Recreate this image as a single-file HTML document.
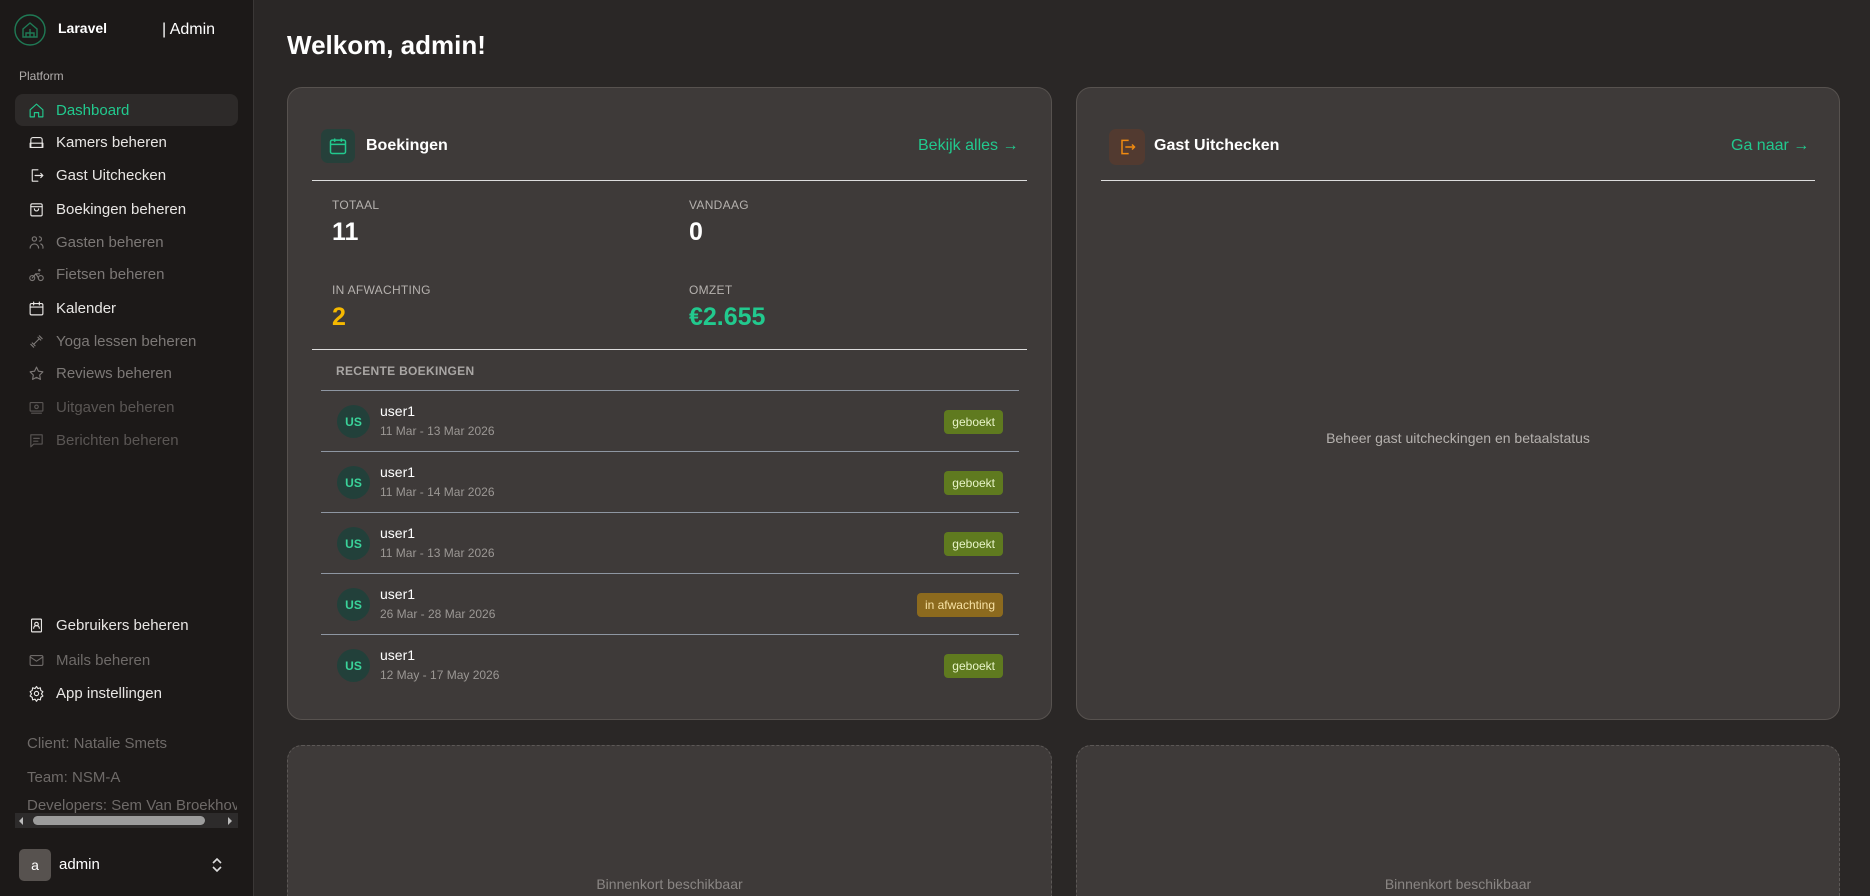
<!DOCTYPE html>
<html><head><meta charset="utf-8"><style>
*{margin:0;padding:0;box-sizing:border-box}
html{width:1870px;height:896px;overflow:hidden}
body{width:1870px;height:896px;overflow:hidden;background:#2a2726;font-family:"Liberation Sans",sans-serif;color:#fff;position:relative}
.abs{position:absolute}
.side{left:0;top:0;width:254px;height:896px;background:#1c1918;border-right:1px solid #3a3736}
.nav{position:absolute;left:15px;width:223px;height:32px;display:flex;align-items:center;font-size:15px;color:#e8e6e4}
.nav svg{position:absolute;left:13px;width:17px;height:17px;fill:none;stroke:currentColor;stroke-width:1.6;stroke-linecap:round;stroke-linejoin:round}
.nav span{position:absolute;left:41px}
.dim{color:#7c7876}
.card{position:absolute;background:#3e3a39;border:1px solid #57524f;border-radius:15px}
.lbl{position:absolute;font-size:12px;color:#b5b1ae;letter-spacing:.3px}
.val{position:absolute;font-size:25px;font-weight:bold}
.row{position:absolute;left:321px;width:698px;height:61px;border-bottom:1px solid #8e96a2}
.av{position:absolute;left:16px;top:14px;width:33px;height:33px;border-radius:50%;background:#22403a;color:#3ad39a;font-size:12px;font-weight:bold;display:flex;align-items:center;justify-content:center}
.nm{position:absolute;left:59px;top:12px;font-size:14px}
.dt{position:absolute;left:59px;top:33px;font-size:12px;color:#9b9794}
.bd{position:absolute;right:16px;top:19px;height:24px;padding:0 8px;border-radius:4px;font-size:12px;display:flex;align-items:center;background:#5f7a1f;color:#e8f4c8}
.bd.w{background:#8c6a1e;color:#f7e2a4}
</style></head><body>
<div class="abs side">
  <svg class="abs" style="left:14px;top:14px" width="32" height="32" viewBox="0 0 32 32" fill="none" stroke="#1f7a55" stroke-width="1.4"><circle cx="16" cy="16" r="15"/><path d="M9 15l7-6 7 6v8H9z M12 23v-4h8v4 M16 15v8"/></svg>
  <div class="abs" style="left:58px;top:20px;font-size:14px;font-weight:bold">Laravel</div>
  <div class="abs" style="left:162px;top:21px;font-size:16px">| Admin</div>
  <div class="abs" style="left:19px;top:69px;font-size:12px;color:#b0acaa">Platform</div>
  <div class="nav" style="top:94px;background:#2d2a29;border-radius:8px;color:#22c98e"><svg viewBox="0 0 24 24"><path d="M3 11l9-8 9 8v10h-6v-6h-6v6H3z"/></svg><span>Dashboard</span></div>
  <div class="nav" style="top:126px"><svg viewBox="0 0 24 24"><path d="M4 19V8a3 3 0 013-3h10a3 3 0 013 3v11M3 13h18v6H3z"/></svg><span>Kamers beheren</span></div>
  <div class="nav" style="top:159px"><svg viewBox="0 0 24 24"><path d="M14 4H6v16h8M10 12h11M18 9l3 3-3 3"/></svg><span>Gast Uitchecken</span></div>
  <div class="nav" style="top:193px"><svg viewBox="0 0 24 24"><rect x="4" y="4" width="16" height="17" rx="2"/><path d="M4 8h16M9 11a3 3 0 006 0"/></svg><span>Boekingen beheren</span></div>
  <div class="nav dim" style="top:226px"><svg viewBox="0 0 24 24"><circle cx="9" cy="7" r="3"/><path d="M3 20a6 6 0 0112 0M16 4a3 3 0 010 6M18 14a5 5 0 013 6"/></svg><span>Gasten beheren</span></div>
  <div class="nav dim" style="top:258px"><svg viewBox="0 0 24 24"><circle cx="6" cy="17" r="3.5"/><circle cx="18" cy="17" r="3.5"/><path d="M6 17l5-6 4 6M11 11h5M15 6a1 1 0 100-.1"/></svg><span>Fietsen beheren</span></div>
  <div class="nav" style="top:292px"><svg viewBox="0 0 24 24"><rect x="3" y="5" width="18" height="16" rx="2"/><path d="M3 10h18M8 3v4M16 3v4"/></svg><span>Kalender</span></div>
  <div class="nav dim" style="top:325px"><svg viewBox="0 0 24 24"><path d="M6 14l4 4M4 16l4 4M14 6l4 4M16 4l4 4M9 15l6-6"/></svg><span>Yoga lessen beheren</span></div>
  <div class="nav dim" style="top:357px"><svg viewBox="0 0 24 24"><path d="M12 3l2.8 5.8 6.2.9-4.5 4.4 1 6.2L12 17.4 6.5 20.3l1-6.2L3 9.7l6.2-.9z"/></svg><span>Reviews beheren</span></div>
  <div class="nav" style="top:391px;color:#5a5654"><svg viewBox="0 0 24 24"><rect x="3" y="5" width="18" height="12" rx="1"/><circle cx="12" cy="11" r="2.5"/><path d="M5 20h14"/></svg><span>Uitgaven beheren</span></div>
  <div class="nav" style="top:424px;color:#5a5654"><svg viewBox="0 0 24 24"><path d="M4 4h16v13H8l-4 4z M8 9h8M8 13h6"/></svg><span>Berichten beheren</span></div>
  <div class="nav" style="top:609px"><svg viewBox="0 0 24 24"><rect x="5" y="3" width="14" height="18" rx="1"/><circle cx="12" cy="10" r="2.5"/><path d="M8 16a4 4 0 018 0"/></svg><span>Gebruikers beheren</span></div>
  <div class="nav dim" style="top:644px;color:#6e6a68"><svg viewBox="0 0 24 24"><rect x="3" y="5" width="18" height="14" rx="2"/><path d="M3 7l9 6 9-6"/></svg><span>Mails beheren</span></div>
  <div class="nav" style="top:677px"><svg viewBox="0 0 24 24"><circle cx="12" cy="12" r="3"/><path d="M12 2l2 3 3.5-1 .5 3.5 3 2-2 3 2 3-3 2-.5 3.5-3.5-1-2 3-2-3-3.5 1L6 17.5l-3-2 2-3-2-3 3-2 .5-3.5 3.5 1z"/></svg><span>App instellingen</span></div>
  <div class="abs" style="left:27px;top:735px;font-size:15px;color:#6e6a68">Client: Natalie Smets</div>
  <div class="abs" style="left:27px;top:769px;font-size:15px;color:#6e6a68">Team: NSM-A</div>
  <div class="abs" style="left:27px;top:797px;font-size:15px;color:#6e6a68;white-space:nowrap;width:210px;overflow:hidden">Developers: Sem Van Broekhove</div>
  <div class="abs" style="left:15px;top:813px;width:223px;height:15px;background:#2d2b2b"></div>
  <div class="abs" style="left:33px;top:816px;width:172px;height:9px;border-radius:5px;background:#9c9c9c"></div>
  <div class="abs" style="left:19px;top:817px;width:0;height:0;border:4px solid transparent;border-right-color:#bbb;border-left:0"></div>
  <div class="abs" style="left:228px;top:817px;width:0;height:0;border:4px solid transparent;border-left-color:#bbb;border-right:0"></div>
  <div class="abs" style="left:19px;top:849px;width:32px;height:32px;border-radius:5px;background:#57524f;font-size:14px;display:flex;align-items:center;justify-content:center">a</div>
  <div class="abs" style="left:59px;top:856px;font-size:15px">admin</div>
  <svg class="abs" style="left:211px;top:857px" width="12" height="16" viewBox="0 0 12 16" fill="none" stroke="#ddd" stroke-width="1.6"><path d="M2 6l4-4 4 4M2 10l4 4 4-4"/></svg>
</div>

<div class="abs" style="left:287px;top:30px;font-size:26px;font-weight:bold">Welkom, admin!</div>

<div class="card" style="left:287px;top:87px;width:765px;height:633px"></div>
<div class="abs" style="left:321px;top:129px;width:34px;height:34px;border-radius:7px;background:#26403a"></div>
<svg class="abs" style="left:328px;top:136px" width="20" height="20" viewBox="0 0 24 24" fill="none" stroke="#22c98e" stroke-width="1.8"><rect x="3" y="5" width="18" height="16" rx="2"/><path d="M3 10h18M8 3v4M16 3v4"/></svg>
<div class="abs" style="left:366px;top:137px;font-size:16px;font-weight:bold">Boekingen</div>
<div class="abs" style="left:918px;top:137px;font-size:16px;color:#22c98e">Bekijk alles →</div>
<div class="abs" style="left:312px;top:180px;width:715px;height:1px;background:#ddd"></div>
<div class="lbl" style="left:332px;top:198px">TOTAAL</div>
<div class="val" style="left:332px;top:218px">11</div>
<div class="lbl" style="left:689px;top:198px">VANDAAG</div>
<div class="val" style="left:689px;top:218px">0</div>
<div class="lbl" style="left:332px;top:283px">IN AFWACHTING</div>
<div class="val" style="left:332px;top:303px;color:#f5b800">2</div>
<div class="lbl" style="left:689px;top:283px">OMZET</div>
<div class="val" style="left:689px;top:303px;color:#22c98e">€2.655</div>
<div class="abs" style="left:312px;top:349px;width:715px;height:1px;background:#ddd"></div>
<div class="lbl" style="left:336px;top:364px;font-weight:bold;color:#a9a6a4">RECENTE BOEKINGEN</div>
<div class="abs" style="left:321px;top:390px;width:698px;height:1px;background:#8e96a2"></div>
<div class="row" style="top:391px"><div class="av">US</div><div class="nm">user1</div><div class="dt">11 Mar - 13 Mar 2026</div><div class="bd">geboekt</div></div>
<div class="row" style="top:452px"><div class="av">US</div><div class="nm">user1</div><div class="dt">11 Mar - 14 Mar 2026</div><div class="bd">geboekt</div></div>
<div class="row" style="top:513px"><div class="av">US</div><div class="nm">user1</div><div class="dt">11 Mar - 13 Mar 2026</div><div class="bd">geboekt</div></div>
<div class="row" style="top:574px"><div class="av">US</div><div class="nm">user1</div><div class="dt">26 Mar - 28 Mar 2026</div><div class="bd w">in afwachting</div></div>
<div class="row" style="top:635px;border:0"><div class="av">US</div><div class="nm">user1</div><div class="dt">12 May - 17 May 2026</div><div class="bd">geboekt</div></div>

<div class="card" style="left:1076px;top:87px;width:764px;height:633px"></div>
<div class="abs" style="left:1109px;top:129px;width:36px;height:36px;border-radius:7px;background:#523a30"></div>
<svg class="abs" style="left:1117px;top:137px" width="20" height="20" viewBox="0 0 24 24" fill="none" stroke="#f08a10" stroke-width="1.8"><path d="M14 4H6v16h8M10 12h11M18 9l3 3-3 3"/></svg>
<div class="abs" style="left:1154px;top:137px;font-size:16px;font-weight:bold">Gast Uitchecken</div>
<div class="abs" style="left:1731px;top:137px;font-size:16px;color:#22c98e">Ga naar →</div>
<div class="abs" style="left:1101px;top:180px;width:714px;height:1px;background:#ddd"></div>
<div class="abs" style="left:1076px;top:430px;width:764px;text-align:center;font-size:14px;color:#b5b1ae">Beheer gast uitcheckingen en betaalstatus</div>

<div class="card" style="left:287px;top:745px;width:765px;height:151px;border:1px dashed #5c5856;border-bottom:0;border-radius:15px 15px 0 0"></div>
<div class="abs" style="left:287px;top:876px;width:765px;text-align:center;font-size:14px;color:#8a8684">Binnenkort beschikbaar</div>
<div class="card" style="left:1076px;top:745px;width:764px;height:151px;border:1px dashed #5c5856;border-bottom:0;border-radius:15px 15px 0 0"></div>
<div class="abs" style="left:1076px;top:876px;width:764px;text-align:center;font-size:14px;color:#8a8684">Binnenkort beschikbaar</div>
</body></html>
